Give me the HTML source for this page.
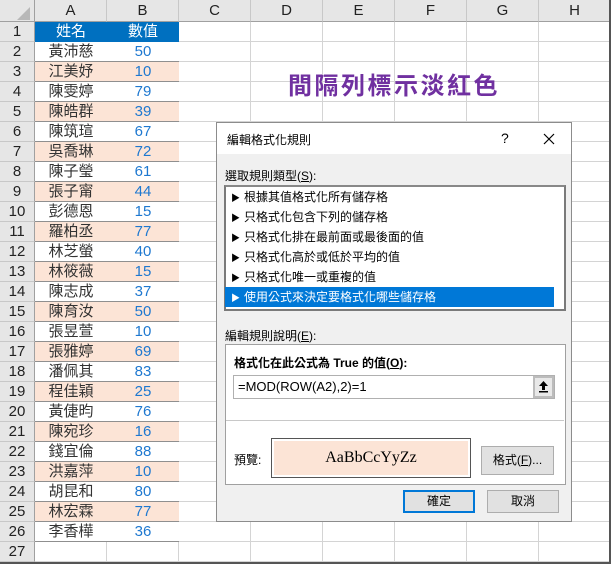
<!DOCTYPE html>
<html><head><meta charset="utf-8"><style>
*{box-sizing:border-box;margin:0;padding:0}
body{width:611px;height:564px;overflow:hidden;background:#fff;position:relative;font-family:"Liberation Sans","Noto Sans CJK TC",sans-serif;}
.a{position:absolute}
.ch{position:absolute;top:0;height:22px;background:#e6e6e6;border-right:1px solid #c8c8c8;border-bottom:1px solid #a0a0a0;text-align:center;font-size:15px;line-height:22px;color:#222}
.rh{position:absolute;left:0;width:35px;height:20px;background:#e6e6e6;border-right:1px solid #a0a0a0;border-bottom:1px solid #c8c8c8;text-align:center;font-size:15px;line-height:20px;color:#222}
.vl{position:absolute;top:22px;width:1px;height:542px;background:#d4d4d4}
.hl{position:absolute;left:35px;width:576px;height:1px;background:#d4d4d4}
.cell{position:absolute;height:20px;font-size:15px;line-height:20px;text-align:center}
.dlg{position:absolute;left:216px;top:122px;width:356px;height:400px;background:#f0f0f0;border:1px solid #8c8c8c;font-size:12px;color:#000}
.li{position:absolute;left:8px;width:329px;height:20px;line-height:20px;font-size:12px;padding-left:6px}
.li span{font-size:9px;margin-right:4px}
.btn{position:absolute;background:#e1e1e1;border:1px solid #adadad;text-align:center;font-size:12px}
</style></head><body>
<div class="a" style="left:0;top:0;width:35px;height:22px;background:#e6e6e6;border-right:1px solid #a0a0a0;border-bottom:1px solid #a0a0a0"></div>
<svg class="a" style="left:17px;top:7px" width="14" height="13"><polygon points="13,0 13,13 0,13" fill="#b8b8b8"/></svg>
<div class="ch" style="left:35px;width:72px">A</div>
<div class="ch" style="left:107px;width:72px">B</div>
<div class="ch" style="left:179px;width:72px">C</div>
<div class="ch" style="left:251px;width:72px">D</div>
<div class="ch" style="left:323px;width:72px">E</div>
<div class="ch" style="left:395px;width:72px">F</div>
<div class="ch" style="left:467px;width:72px">G</div>
<div class="ch" style="left:539px;width:72px">H</div>
<div id="g"></div>
<div class="a" style="left:288px;top:66px;font-size:24px;font-weight:bold;color:#7030a0;letter-spacing:2.5px">間隔列標示淡紅色</div>
<div class="a" style="right:0;top:0;width:2px;height:564px;background:#555"></div>
<div class="a" style="left:0;bottom:0;width:611px;height:2px;background:#555"></div>

<div class="dlg">
 <div class="a" style="left:0;top:0;width:354px;height:31px;background:#fff"></div>
 <div class="a" style="left:10px;top:8px;font-size:12px">編輯格式化規則</div>
 <div class="a" style="left:284px;top:7px;font-size:14px">?</div>
 <svg class="a" style="left:326px;top:10px" width="12" height="12"><path d="M1 1L11 11M11 1L1 11" stroke="#000" stroke-width="1.2"/></svg>
 <div class="a" style="left:8px;top:44px">選取規則類型(<u>S</u>):</div>
 <div class="a" style="left:7px;top:62px;width:342px;height:126px;background:#fff;border:2px solid #7a7a7a;border-top-color:#888"></div>
 <div class="li" style="top:64px"><span>▶</span>根據其值格式化所有儲存格</div>
 <div class="li" style="top:84px"><span>▶</span>只格式化包含下列的儲存格</div>
 <div class="li" style="top:104px"><span>▶</span>只格式化排在最前面或最後面的值</div>
 <div class="li" style="top:124px"><span>▶</span>只格式化高於或低於平均的值</div>
 <div class="li" style="top:144px"><span>▶</span>只格式化唯一或重複的值</div>
 <div class="li" style="top:164px;background:#0078d7;color:#fff"><span>▶</span>使用公式來決定要格式化哪些儲存格</div>
 <div class="a" style="left:8px;top:204px">編輯規則說明(<u>E</u>):</div>
 <div class="a" style="left:8px;top:221px;width:341px;height:141px;background:#fff;border:1px solid #a0a0a0"></div>
 <div class="a" style="left:17px;top:231px;font-weight:bold">格式化在此公式為 True 的值(<u>O</u>):</div>
 <div class="a" style="left:16px;top:252px;width:322px;height:24px;background:#fff;border:1px solid #b0b0b0;font-size:13px;line-height:22px;padding-left:4px">=MOD(ROW(A2),2)=1</div>
 <div class="a" style="left:316px;top:253px;width:21px;height:22px;background:#e8e8e8;border:2px solid #bcbcbc"></div>
 <svg class="a" style="left:321px;top:257px" width="11" height="13"><path d="M5.5 1L1 6h3v4h3V6h3z" fill="#000"/><rect x="1" y="11" width="9" height="1.5" fill="#000"/></svg>
 <div class="a" style="left:9px;top:297px;width:338px;height:1px;background:#c8c8c8"></div>
 <div class="a" style="left:17px;top:328px">預覽:</div>
 <div class="a" style="left:54px;top:315px;width:200px;height:40px;border:1px solid #555;background:#fff;padding:2px"><div style="width:100%;height:100%;background:#fce4d6;text-align:center;font-family:'Liberation Serif',serif;font-size:16px;line-height:33px">AaBbCcYyZz</div></div>
 <div class="btn" style="left:264px;top:323px;width:73px;height:29px;line-height:27px">格式(<u>F</u>)...</div>
 <div class="btn" style="left:186px;top:367px;width:72px;height:23px;line-height:19px;border:2px solid #0078d7">確定</div>
 <div class="btn" style="left:270px;top:367px;width:72px;height:23px;line-height:21px">取消</div>
</div>
<script>
var n=["黃沛慈","江美妤","陳雯婷","陳皓群","陳筑瑄","吳喬琳","陳子瑩","張子甯","彭德恩","羅柏丞","林芝螢","林筱薇","陳志成","陳育汝","張昱萱","張雅婷","潘佩其","程佳穎","黃倢昀","陳宛珍","錢宜倫","洪嘉萍","胡昆和","林宏霖","李香樺"];
var v=[50,10,79,39,67,72,61,44,15,77,40,15,37,50,10,69,83,25,76,16,88,10,80,77,36];
var h="";
var xs=[107,179,251,323,395,467,539];
for(var i=0;i<xs.length;i++)h+='<div class="vl" style="left:'+(xs[i]-1)+'px"></div>';
for(var r=1;r<=27;r++){var t=22+(r-1)*20;
h+='<div class="rh" style="top:'+t+'px">'+r+'</div>';
h+='<div class="hl" style="top:'+(t+19)+'px"></div>';}
h+='<div class="a" style="left:35px;top:22px;width:144px;height:20px;background:#0070c0"></div>';
h+='<div class="cell" style="left:35px;top:22px;width:72px;color:#fff">姓名</div><div class="cell" style="left:107px;top:22px;width:72px;color:#fff">數值</div>';
for(var k=0;k<25;k++){var r=k+2,t=22+(r-1)*20;
var bg=(r%2==1)?"#fce4d6":"#fff";
h+='<div class="a" style="left:35px;top:'+t+'px;width:144px;height:20px;background:'+bg+';border-bottom:1px solid #8f8f8f"></div>';
h+='<div class="cell" style="left:35px;top:'+t+'px;width:72px;color:#333">'+n[k]+'</div>';
h+='<div class="cell" style="left:107px;top:'+t+'px;width:72px;color:#1e78d0">'+v[k]+'</div>';}
document.getElementById("g").innerHTML=h;
</script>
</body></html>
